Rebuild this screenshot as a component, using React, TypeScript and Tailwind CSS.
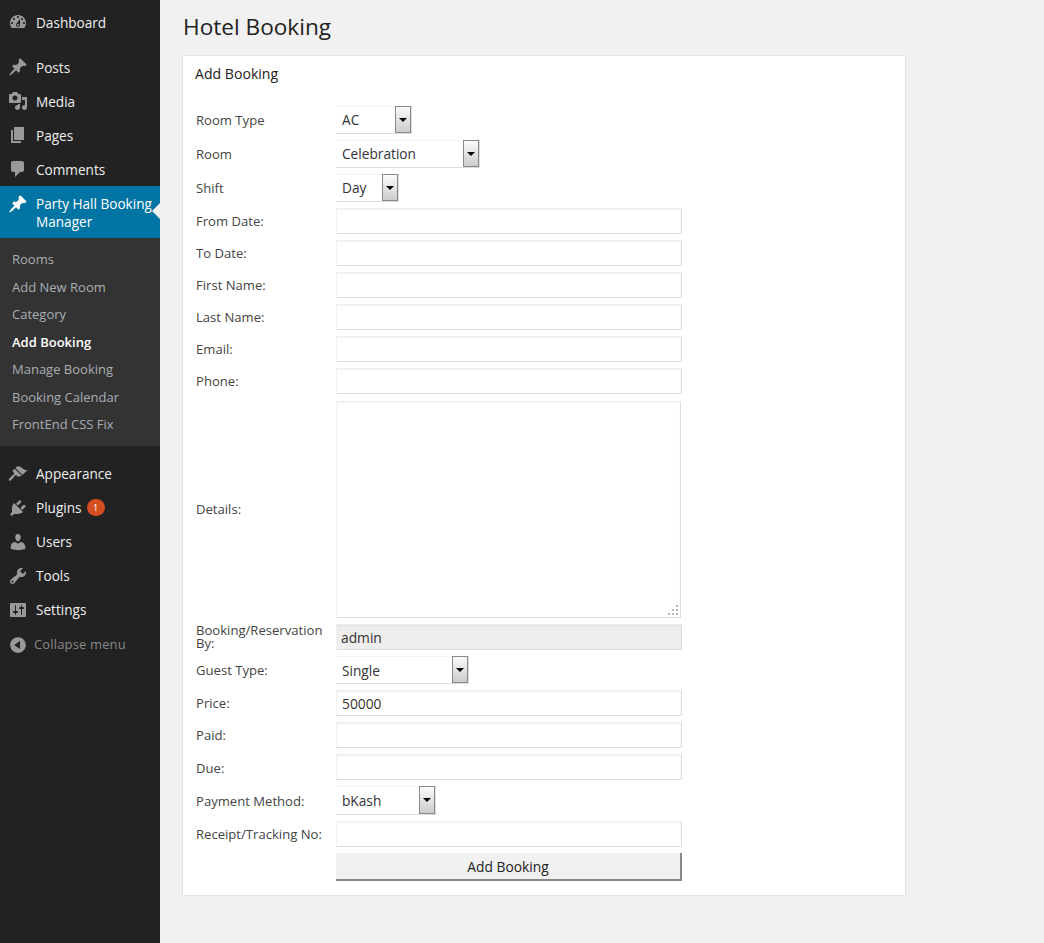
import type { ReactNode } from "react"

const ICONS: Record<string, string> = {
  dashboard:
    "M3.76 16h12.48c1.1-1.37 1.76-3.11 1.76-5 0-4.42-3.58-8-8-8s-8 3.58-8 8c0 1.89.66 3.63 1.76 5zM10 4c.55 0 1 .45 1 1s-.45 1-1 1-1-.45-1-1 .45-1 1-1zM6 6c.55 0 1 .45 1 1s-.45 1-1 1-1-.45-1-1 .45-1 1-1zm8 0c.55 0 1 .45 1 1s-.45 1-1 1-1-.45-1-1 .45-1 1-1zm-5.37 5.55L12 7v6c0 1.1-.9 2-2 2s-2-.9-2-2c0-.57.24-1.08.63-1.45zM4 10c.55 0 1 .45 1 1s-.45 1-1 1-1-.45-1-1 .45-1 1-1zm12 0c.55 0 1 .45 1 1s-.45 1-1 1-1-.45-1-1 .45-1 1-1zm-5 3c0-.55-.45-1-1-1s-1 .45-1 1 .45 1 1 1 1-.45 1-1z",
  post: "M10.44 3.02l1.82-1.82 6.36 6.35-1.83 1.82c-1.05-.68-2.48-.57-3.41.36l-.75.75c-.92.93-1.04 2.35-.35 3.41l-1.83 1.82-2.41-2.41-2.8 2.79c-.42.42-3.38 2.71-3.8 2.29s1.86-3.39 2.28-3.81l2.79-2.79L4.1 9.36l1.83-1.82c1.05.69 2.48.57 3.4-.36l.75-.75c.93-.92 1.05-2.35.36-3.41z",
  media:
    "M13 11V4c0-.55-.45-1-1-1h-1.67L9 1H5L3.67 3H2c-.55 0-1 .45-1 1v7c0 .55.45 1 1 1h10c.55 0 1-.45 1-1zM7 4.5c1.38 0 2.5 1.12 2.5 2.5S8.38 9.5 7 9.5 4.5 8.38 4.5 7 5.62 4.5 7 4.5zM14 6h5v10.5c0 1.38-1.12 2.5-2.5 2.5S14 17.88 14 16.5s1.12-2.5 2.5-2.5c.17 0 .34.02.5.05V9h-3V6zm-4 8.05V13h2v3.5c0 1.38-1.12 2.5-2.5 2.5S7 17.88 7 16.5 8.12 14 9.5 14c.17 0 .34.02.5.05z",
  page: "M6 15V2h10v13H6zm-1 1h8v2H3V5h2v11z",
  comments: "M5 2h9c1.1 0 2 .9 2 2v7c0 1.1-.9 2-2 2h-2l-5 5v-5H5c-1.1 0-2-.9-2-2V4c0-1.1.9-2 2-2z",
  appearance:
    "M14.48 11.06L7.41 3.99l1.5-1.5c.5-.56 2.3-.47 3.51.32 1.21.8 1.43 1.28 2.91 2.1 1.18.64 2.45 1.26 4.45.85zm-.71.71L6.7 4.7 4.93 6.47c-.39.39-.39 1.02 0 1.41l1.06 1.06c.39.39.39 1.03 0 1.42-.6.6-1.43 1.11-2.21 1.69-.35.26-.7.53-1.01.84-1.43 1.43-2.64 2.99-1.92 3.71s2.28-.49 3.71-1.92c.31-.31.58-.66.84-1.01.58-.78 1.09-1.61 1.69-2.21.39-.39 1.03-.39 1.42 0l1.06 1.06c.39.39 1.02.39 1.41 0z",
  plugins:
    "M13.11 4.36L9.87 7.6 8 5.73l3.24-3.24c.35-.34 1.05-.2 1.56.32.52.51.66 1.21.31 1.55zm-8 1.77l.91-1.12 9.01 9.01-1.19.84c-.71.71-2.63 1.16-3.82 1.16H6.14L4.9 17.26c-.59.59-1.54.59-2.12 0-.59-.58-.59-1.53 0-2.12l1.24-1.24v-3.88c0-1.13.4-3.19 1.09-3.89zm7.26 3.97l3.24-3.24c.34-.35 1.04-.21 1.55.31.52.51.66 1.21.31 1.55l-3.24 3.25z",
  users:
    "M10 9.25c-2.27 0-2.73-3.44-2.73-3.44C7 4.02 7.82 2 9.97 2c2.16 0 2.98 2.02 2.71 3.81 0 0-.41 3.44-2.68 3.44zm0 2.57L12.72 10c2.39 0 4.52 2.33 4.52 4.53v2.49s-3.65 1.13-7.24 1.13c-3.65 0-7.24-1.13-7.24-1.13v-2.49c0-2.25 1.94-4.48 4.47-4.48z",
  tools:
    "M16.68 9.77c-1.34 1.34-3.3 1.67-4.95.99l-5.41 6.52c-.99.99-2.59.99-3.58 0s-.99-2.59 0-3.57l6.52-5.42c-.68-1.65-.35-3.61.99-4.95 1.28-1.28 3.12-1.62 4.72-1.06l-2.89 2.89 2.82 2.82 2.86-2.87c.53 1.58.18 3.39-1.08 4.65zM3.81 16.21c.4.39 1.04.39 1.43 0 .4-.4.4-1.04 0-1.43-.39-.4-1.03-.4-1.43 0-.39.39-.39 1.03 0 1.43z",
  settings:
    "M18 16V4c0-.55-.45-1-1-1H3c-.55 0-1 .45-1 1v12c0 .55.45 1 1 1h14c.55 0 1-.45 1-1zM8 11h1c.55 0 1 .45 1 1s-.45 1-1 1H8v1.5c0 .28-.22.5-.5.5s-.5-.22-.5-.5V13H6c-.55 0-1-.45-1-1s.45-1 1-1h1V5.5c0-.28.22-.5.5-.5s.5.22.5.5V11zm5-2h-1c-.55 0-1-.45-1-1s.45-1 1-1h1V5.5c0-.28.22-.5.5-.5s.5.22.5.5V7h1c.55 0 1 .45 1 1s-.45 1-1 1h-1v5.5c0 .28-.22.5-.5.5s-.5-.22-.5-.5V9z",
  collapse: "M10 2.16c4.33 0 7.84 3.51 7.84 7.84s-3.51 7.84-7.84 7.84S2.16 14.33 2.16 10 5.71 2.16 10 2.16zm2 11.72V6.12L6.18 9.97z",
}

function MenuIcon({ name, active }: { name: string; active?: boolean }) {
  return (
    <svg viewBox="0 0 20 20" className={`h-5 w-5 shrink-0 ${active ? "fill-white" : "fill-[#999999]"}`}>
      <path fillRule="evenodd" d={ICONS[name]} />
    </svg>
  )
}

function MenuItem({ icon, label, badge }: { icon: string; label: string; badge?: string }) {
  return (
    <div className="flex h-[34px] items-center pl-[8px] text-[13.6px] text-[#eeeeee]">
      <MenuIcon name={icon} />
      <span className="ml-2 pt-[2px]">{label}</span>
      {badge && (
        <span className="ml-[5px] flex h-[17px] w-[18px] items-center justify-center rounded-full bg-[#d54e21] text-[9px] text-white">
          {badge}
        </span>
      )}
    </div>
  )
}

const SUB_ITEMS = ["Rooms", "Add New Room", "Category", "Add Booking", "Manage Booking", "Booking Calendar", "FrontEnd CSS Fix"]

function Sidebar() {
  return (
    <aside className="w-[160px] shrink-0 bg-[#222222] pt-[5px]">
      <MenuItem icon="dashboard" label="Dashboard" />
      <div className="mt-[11px]">
        <MenuItem icon="post" label="Posts" />
        <MenuItem icon="media" label="Media" />
        <MenuItem icon="page" label="Pages" />
        <MenuItem icon="comments" label="Comments" />
      </div>

      {/* current section with its submenu */}
      <div className="relative flex h-[52px] items-start bg-[#0074a2] pl-[8px] pt-[8px] text-[13.6px] leading-[18px] text-white">
        <MenuIcon name="post" active />
        <span className="ml-2 whitespace-nowrap pt-px">
          Party Hall Booking
          <br />
          Manager
        </span>
        <span className="absolute right-0 top-[17px] h-0 w-0 border-y-[8px] border-r-[8px] border-y-transparent border-r-[#f1f1f1]" />
      </div>
      <div className="bg-[#333333] pb-[7px] pt-[8px] text-[13px]">
        {SUB_ITEMS.map((item) => (
          <div
            key={item}
            className={`flex h-[27.5px] items-center pl-3 ${item === "Add Booking" ? "font-semibold text-white" : "text-[#a9aeb3]"}`}
          >
            {item}
          </div>
        ))}
      </div>

      <div className="mt-[11px]">
        <MenuItem icon="appearance" label="Appearance" />
        <MenuItem icon="plugins" label="Plugins" badge="1" />
        <MenuItem icon="users" label="Users" />
        <MenuItem icon="tools" label="Tools" />
        <MenuItem icon="settings" label="Settings" />
      </div>
      <div className="flex h-[36px] items-center pl-[8px] text-[13px] text-[#888888]">
        <MenuIcon name="collapse" />
        <span className="ml-[6px] tracking-[0.15px]">Collapse menu</span>
      </div>
    </aside>
  )
}

function Row({ label, low, children }: { label: string; low?: boolean; children: ReactNode }) {
  return (
    <div className="flex items-center">
      <label className={`w-[140px] shrink-0 pr-3 text-[13.1px] leading-[13px] text-[#444444] ${low ? "pt-[2px]" : ""}`}>{label}</label>
      {children}
    </div>
  )
}

const fieldClass =
  "block border border-t-[#eeeeee] border-r-[#dddddd] border-b-[#dddddd] border-l-[#f2f2f2] px-[5px] text-[13.8px] text-[#333333] outline-none shadow-[inset_0_1px_2px_rgba(0,0,0,0.05)]"

function TextField({ value, disabled }: { value?: string; disabled?: boolean }) {
  return (
    <input
      readOnly
      value={value ?? ""}
      className={`${fieldClass} h-[26px] w-[346px] ${disabled ? "bg-[#eeeeee] pl-1" : "bg-white"}`}
    />
  )
}

function SelectField({ value, width, tall, low }: { value: string; width: string; tall?: boolean; low?: boolean }) {
  return (
    <div className={`relative ${tall ? "h-[29px]" : "h-[28px]"} ${width}`}>
      <select
        value={value}
        onChange={() => {}}
        className={`block h-full w-full appearance-none border-t border-b border-t-[#f4f4f4] border-b-[#dddddd] bg-white px-[6px] text-[13.7px] text-[#333333] outline-none ${low ? "pt-[2px]" : ""}`}
      >
        <option>{value}</option>
      </select>
      {/* dropdown arrow box sits over the select's right edge */}
      <div className="pointer-events-none absolute right-0 top-0 flex h-full w-[17px] items-center justify-center border-r border-b border-[#dddddd]">
        <div className="flex h-full w-full items-center justify-center border border-[#888888] bg-gradient-to-b from-[#fbfbfb] to-[#cccccc]">
          <span className="h-0 w-0 border-x-[4px] border-t-[4px] border-x-transparent border-t-black" />
        </div>
      </div>
    </div>
  )
}

export default function App() {
  return (
    <div className="flex min-h-[943px] bg-[#f1f1f1] font-['Open_Sans',sans-serif]">
      <Sidebar />
      <main className="flex-1 pl-[22px]">
        <h1 className="pl-px pt-[11px] text-[22.6px] leading-[32px] text-[#222222]">Hotel Booking</h1>
        <section className="mt-3 h-[841px] w-[724px] border border-[#e5e5e5] bg-white pl-[13px]">
          <h2 className="-ml-px pt-[8px] text-[14.1px] leading-[20px] text-[#222222]">Add Booking</h2>
          <form className="mt-[22px] flex flex-col gap-[6px]">
            <Row label="Room Type">
              <SelectField value="AC" width="w-[76px]" />
            </Row>
            <Row label="Room">
              <SelectField value="Celebration" width="w-[144px]" />
            </Row>
            <Row label="Shift">
              <SelectField value="Day" width="w-[63px]" />
            </Row>
            <Row label="From Date:">
              <TextField />
            </Row>
            <Row label="To Date:">
              <TextField />
            </Row>
            <Row label="First Name:">
              <TextField />
            </Row>
            <Row label="Last Name:">
              <TextField />
            </Row>
            <Row label="Email:">
              <TextField />
            </Row>
            <Row label="Phone:">
              <TextField />
            </Row>
            <Row label="Details:">
              <div className="relative mt-px">
                <textarea readOnly className={`${fieldClass} h-[217px] w-[345px] resize-none bg-white`} />
                <svg viewBox="0 0 11 11" className="pointer-events-none absolute bottom-[2px] right-[2px] h-[11px] w-[11px] fill-[#bbbbbb]">
                  <rect x="8" y="0" width="2" height="2" />
                  <rect x="4" y="4" width="2" height="2" />
                  <rect x="8" y="4" width="2" height="2" />
                  <rect x="0" y="8" width="2" height="2" />
                  <rect x="4" y="8" width="2" height="2" />
                  <rect x="8" y="8" width="2" height="2" />
                </svg>
              </div>
            </Row>
            <Row label="Booking/Reservation By:">
              <TextField value="admin" disabled />
            </Row>
            <Row label="Guest Type:">
              <SelectField value="Single" width="w-[133px]" low />
            </Row>
            <Row label="Price:">
              <TextField value="50000" />
            </Row>
            <Row label="Paid:">
              <TextField />
            </Row>
            <Row label="Due:" low>
              <TextField />
            </Row>
            <Row label="Payment Method:" low>
              <SelectField value="bKash" width="w-[100px]" tall low />
            </Row>
            <Row label="Receipt/Tracking No:">
              <TextField />
            </Row>
            <div className="pl-[140px]">
              <button
                type="button"
                className="h-[28px] w-[346px] border-r-2 border-b-2 border-[#888888] bg-[#f1f1f1] pt-[2px] text-[13.8px] text-[#222222]"
              >
                Add Booking
              </button>
            </div>
          </form>
        </section>
      </main>
    </div>
  )
}
